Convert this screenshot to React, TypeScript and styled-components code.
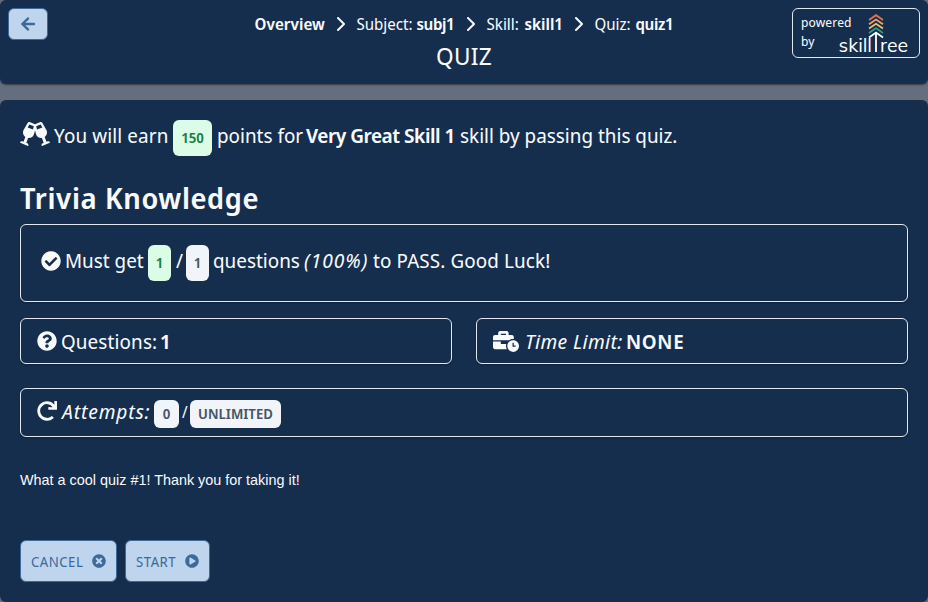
import React from 'react';
import styled, { createGlobalStyle } from 'styled-components';
import {
  FaArrowLeft,
  FaGlassCheers,
  FaCheckCircle,
  FaQuestionCircle,
  FaBusinessTime,
  FaTimesCircle,
  FaPlayCircle,
  FaRedo,
} from 'react-icons/fa';
import { FaChevronRight } from 'react-icons/fa6';

const GlobalStyle = createGlobalStyle`
  * { box-sizing: border-box; }
  body {
    margin: 0;
    background: #646e7d;
    color: #f8fafc;
    font-family: "Noto Sans Display", "Noto Sans", sans-serif;
    font-weight: 400;
  }
`;

const Page = styled.div`
  display: flex;
  flex-direction: column;
  gap: 16px;
  height: 602px;
  overflow: hidden;
`;

const Header = styled.header`
  display: grid;
  grid-template-columns: 128px 1fr 128px;
  align-items: start;
  height: 84px;
  padding: 8px;
  border-radius: 6px;
  background: #162e4d;
  box-shadow: 0 1px 2px rgba(0, 0, 0, 0.45);
`;

const BackButton = styled.button`
  display: flex;
  align-items: center;
  justify-content: center;
  width: 40px;
  height: 32px;
  padding: 0;
  border: 1px solid #3d6a98;
  border-radius: 6px;
  background: #bfd5ee;
  color: #3d6a98;
  font-size: 16px;
`;

const HeaderCenter = styled.div`
  display: flex;
  flex-direction: column;
  align-items: center;
`;

const Crumbs = styled.nav`
  display: flex;
  align-items: center;
  height: 32px;
`;

const Separator = styled(FaChevronRight)`
  width: 10px;
  height: 16px;
  margin: 0 12px 0 9px;
`;

const PageTitle = styled.div`
  font-size: 24px;
  line-height: 32px;
  letter-spacing: 0.01em;
`;

const PoweredBy = styled.div`
  display: flex;
  justify-content: space-between;
  width: 128px;
  height: 50px;
  padding: 4px 10px 0 8px;
  border: 1px solid #e2e8f0;
  border-radius: 6px;
  font-size: 12.8px;
  line-height: 19px;
`;

const PoweredText = styled.div`
  width: 36px;
  letter-spacing: 0.01em;
`;

const Logo = styled.svg`
  width: 72px;
  height: 42px;
  flex: none;
  overflow: visible;
`;

const Panel = styled.main`
  flex: 1;
  padding: 20px;
  border-radius: 6px;
  background: #162e4d;
`;

const Run = styled.span<{ $w: number; $size?: number; $bold?: boolean; $italic?: boolean; $ls?: number }>`
  flex: none;
  width: ${(p) => p.$w}px;
  white-space: nowrap;
  font-size: ${(p) => p.$size ?? 20}px;
  font-weight: ${(p) => (p.$bold ? 600 : 400)};
  font-style: ${(p) => (p.$italic ? 'italic' : 'normal')};
  letter-spacing: ${(p) => p.$ls ?? (p.$bold ? -0.024 : 0)}em;
`;

const Line = styled.div<{ $h: number; $rise?: number }>`
  display: flex;
  align-items: center;
  height: ${(p) => p.$h}px;
  line-height: ${(p) => p.$h}px;

  ${Run} {
    margin-top: ${(p) => -2 * (p.$rise ?? 0)}px;
  }
`;

const IconSlot = styled.span<{ $w: number; $size: number; $shift?: number }>`
  display: flex;
  flex: none;
  width: ${(p) => p.$w}px;
  font-size: ${(p) => p.$size}px;
  margin-top: ${(p) => p.$shift ?? 0}px;
`;

const Glasses = styled(FaGlassCheers)`
  width: 30px;
  height: 24px;
`;

const Clock = styled(FaBusinessTime)`
  width: 26px;
  height: 21px;
`;

const Tag = styled.span<{ $w: number; $h: number; $green?: boolean; $gap?: number; $drop?: number }>`
  display: flex;
  flex: none;
  align-items: center;
  justify-content: center;
  width: ${(p) => p.$w}px;
  height: ${(p) => p.$h}px;
  margin: ${(p) => p.$drop ?? 0}px ${(p) => p.$gap ?? 5}px 0 0;
  border-radius: 6px;
  background: ${(p) => (p.$green ? '#dcfce7' : '#f1f5f9')};
  color: ${(p) => (p.$green ? '#15803d' : '#475569')};
  font-size: 14px;
  font-weight: 600;
  line-height: 1;
`;

const QuizName = styled.h2`
  margin: 24px 0 8px;
  font-size: 28.8px;
  line-height: 36px;
  font-weight: 600;
  letter-spacing: 0.022em;
`;

const Card = styled.section<{ $h: number; $pad: string }>`
  height: ${(p) => p.$h}px;
  padding: ${(p) => p.$pad};
  border: 1px solid #e2e8f0;
  border-radius: 6px;
  box-shadow: 0 1px 2px rgba(0, 0, 0, 0.3);
`;

const CardPair = styled.div`
  display: grid;
  grid-template-columns: 1fr 1fr;
  gap: 24px;
  margin: 16px 0 24px;
`;

const Description = styled.p`
  margin: 34px 0 51px;
  font: 14.4px/18px "Liberation Sans", Arial, sans-serif;
`;

const Actions = styled.div`
  display: flex;
  gap: 8px;
`;

const ActionButton = styled.button<{ $w: number }>`
  display: flex;
  align-items: center;
  justify-content: space-between;
  width: ${(p) => p.$w}px;
  height: 42px;
  padding: 0 10px;
  border: 1px solid #3d6a98;
  border-radius: 6px;
  background: #bfd5ee;
  color: #3d6a98;
  font: 400 14px "Noto Sans Display", "Noto Sans", sans-serif;
  letter-spacing: 0.035em;

  svg { width: 14px; height: 14px; }
`;

const chevrons = [
  { y: 5.5, color: '#e76f51' },
  { y: 9.8, color: '#f4a261' },
  { y: 14.1, color: '#e9c46a' },
  { y: 18.4, color: '#2a9d8f' },
];

function SkillTreeLogo() {
  return (
    <Logo viewBox="0 0 72 42" fill="none" strokeWidth="1.8">
      {chevrons.map(({ y, color }) => (
        <path key={color} d={`M32 ${y + 1.5}L39 ${y - 3.3}L46 ${y + 1.5}`} stroke={color} />
      ))}
      <path d="M32 24.5L39 19.5L46 24.5M39 20V39" stroke="#fff" />
      <g fill="#fff" fontFamily="Mulish, Lato, sans-serif" fontWeight="400" fontSize="19">
        <text x="1.5" y="38.5" textLength="33.5" lengthAdjust="spacingAndGlyphs">skill</text>
        <text x="43" y="38.5" textLength="28" lengthAdjust="spacingAndGlyphs">ree</text>
      </g>
    </Logo>
  );
}

export default function App() {
  return (
    <>
      <GlobalStyle />
      <Page>
        <Header>
          <BackButton aria-label="Back"><FaArrowLeft /></BackButton>
          <HeaderCenter>
            <Crumbs>
              <Run $w={71} $size={16} $bold $ls={0.002}>Overview</Run>
              <Separator />
              <Run $w={60} $size={16}>Subject:</Run>
              <Run $w={39} $size={16} $bold>subj1</Run>
              <Separator />
              <Run $w={38} $size={16}>Skill:</Run>
              <Run $w={39} $size={16} $bold $ls={0}>skill1</Run>
              <Separator />
              <Run $w={41} $size={16}>Quiz:</Run>
              <Run $w={38} $size={16} $bold>quiz1</Run>
            </Crumbs>
            <PageTitle>QUIZ</PageTitle>
          </HeaderCenter>
          <PoweredBy>
            <PoweredText>powered by</PoweredText>
            <SkillTreeLogo />
          </PoweredBy>
        </Header>
        <Panel>
          <Line $h={36} $rise={2}>
            <IconSlot $w={34} $size={24} $shift={-8}><Glasses /></IconSlot>
            <Run $w={119} $ls={0.006}>You will earn</Run>
            <Tag $w={39} $h={36} $green>150</Tag>
            <Run $w={89}>points for</Run>
            <Run $w={154} $bold>Very Great Skill 1</Run>
            <Run $w={220}>skill by passing this quiz.</Run>
          </Line>
          <QuizName>Trivia Knowledge</QuizName>
          <Card $h={78} $pad="20px">
            <Line $h={36} $rise={2}>
              <IconSlot $w={24} $size={20} $shift={-5}><FaCheckCircle /></IconSlot>
              <Run $w={83}>Must get</Run>
              <Tag $w={23} $h={36} $green>1</Tag>
              <Run $w={10}>/</Run>
              <Tag $w={23} $h={36} $gap={4}>1</Tag>
              <Run $w={91}>questions</Run>
              <Run $w={69} $italic $ls={0.055}>(100%)</Run>
              <Run $w={180} $ls={0.006}>to PASS. Good Luck!</Run>
            </Line>
          </Card>
          <CardPair>
            <Card $h={46} $pad="4px 16px">
              <Line $h={36} $rise={-1}>
                <IconSlot $w={24} $size={20}><FaQuestionCircle /></IconSlot>
                <Run $w={99} $ls={0.006}>Questions:</Run>
                <Run $w={12} $bold>1</Run>
              </Line>
            </Card>
            <Card $h={46} $pad="4px 16px">
              <Line $h={36} $rise={-1}>
                <IconSlot $w={32} $size={20}><Clock /></IconSlot>
                <Run $w={101} $italic $ls={0.022}>Time Limit:</Run>
                <Run $w={60} $bold $ls={0.035}>NONE</Run>
              </Line>
            </Card>
          </CardPair>
          <Card $h={49} $pad="4px 16px">
            <Line $h={36} $rise={-1}>
              <IconSlot $w={25} $size={20}><FaRedo /></IconSlot>
              <Run $w={92} $italic $ls={0.044}>Attempts:</Run>
              <Tag $w={25} $h={28} $gap={3} $drop={6}>0</Tag>
              <Run $w={8} $size={16}>/</Run>
              <Tag $w={91} $h={28} $drop={6}>UNLIMITED</Tag>
            </Line>
          </Card>
          <Description>What a cool quiz #1! Thank you for taking it!</Description>
          <Actions>
            <ActionButton $w={97}>CANCEL <FaTimesCircle /></ActionButton>
            <ActionButton $w={85}>START <FaPlayCircle /></ActionButton>
          </Actions>
        </Panel>
      </Page>
    </>
  );
}
